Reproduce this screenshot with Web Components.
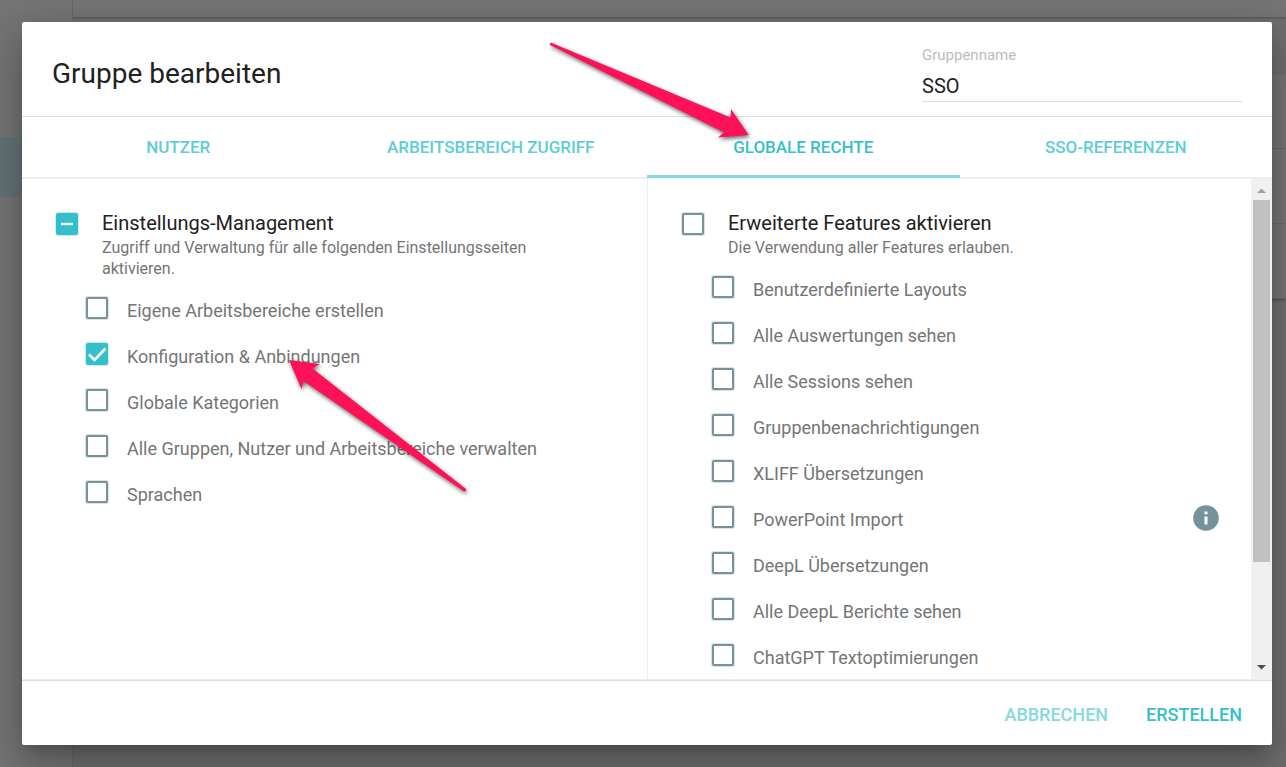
<!DOCTYPE html>
<html lang="de">
<head>
<meta charset="utf-8">
<meta name="viewport" content="width=device-width, initial-scale=1">
<title>Gruppe bearbeiten</title>
<style>
  html, body { height: 100%; }
  body { margin: 0; overflow: hidden; font-family: Roboto, sans-serif; color: #212121; background: #757575; }
</style>
</head>
<body>
<group-page></group-page>

<script>
const define = (name, html, setup) => {
  const tpl = document.createElement('template');
  tpl.innerHTML = html;
  customElements.define(name, class extends HTMLElement {
    constructor() {
      super();
      this.attachShadow({ mode: 'open' }).append(tpl.content.cloneNode(true));
    }
    connectedCallback() { if (setup) setup(this, this.shadowRoot); }
  });
};

/* Dimmed application behind the dialog */
define('app-backdrop', `
  <style>
    :host { display: grid; grid-template-columns: 73px 1fr; height: 100%; background: #757575; }
    aside { border-right: 1px solid #686868; padding-top: 137px; }
    .active { height: 60px; background: #657375; }
    main { display: flex; flex-direction: column; background: #6f6f6f; }
    .bar { height: 17px; background: #757575; box-shadow: 0 1px 2px #0004; clip-path: inset(0 0 -4px 0); }
    .card { margin-top: 57px; background: #757575; box-shadow: 0 1px 3px #0005; }
    .row { height: 74px; border-bottom: 1px solid #696969; }
  </style>
  <aside><div class="active"></div></aside>
  <main>
    <div class="bar"></div>
    <div class="card"><div class="row"></div><div class="row"></div><div class="row"></div></div>
  </main>
`);

/* Checkbox with a slotted label; kind="main" gives the section heading style */
define('check-item', `
  <style>
    :host { display: flex; height: 46px; align-items: flex-start; font-size: 18px; line-height: 24px; color: #757575; }
    label { display: flex; flex: 1; gap: 18px; }
    .box { display: grid; flex: none; width: 24px; height: 24px; place-items: center; }
    .box > * { grid-area: 1 / 1; }
    input { appearance: none; box-sizing: border-box; margin: 0; width: 22px; height: 22px;
            border: 2px solid #76929a; border-radius: 2px; background: #fff; box-shadow: 0 0 0 1px #76929a44; }
    input:checked, input:indeterminate { border-color: #35bfcb; background: #35bfcb; box-shadow: 0 0 0 1px #35bfcb44; }
    svg { width: 24px; height: 24px; fill: none; stroke: #fff; pointer-events: none; display: none; }
    input:checked ~ .tick, input:indeterminate ~ .dash { display: block; }
    .text { padding-top: 3px; }
    .note { display: none; }
    :host([kind="main"]) { height: auto; font-size: 20px; line-height: 22px; color: #212121; }
    :host([kind="main"]) label { gap: 23px; }
    :host([kind="main"]) .text { padding: 0; max-width: 480px; }
    :host([kind="main"]) .note { display: block; padding-top: 3px; font-size: 16px; line-height: 21px; color: #757575; }
  </style>
  <label>
    <span class="box">
      <input type="checkbox">
      <svg class="tick" viewBox="0 0 24 24"><path d="M4 12.5 9.5 18 20.5 6.500" stroke-width="2.6"/></svg>
      <svg class="dash" viewBox="0 0 24 24"><path d="M6 12H18" stroke-width="2.4"/></svg>
    </span>
    <span class="text"><slot></slot><span class="note"><slot name="note"></slot></span></span>
  </label>
  <slot name="action"></slot>
`, (el, root) => {
  const box = root.querySelector('input');
  box.checked = el.getAttribute('state') === 'checked';
  box.indeterminate = el.getAttribute('state') === 'mixed';
});

define('info-button', `
  <style>
    :host { display: block; flex: none; margin-right: 2px; }
    button { display: block; margin: 0; padding: 0; border: 0; background: none; }
    svg { display: block; width: 26px; height: 26px; }
  </style>
  <button type="button" aria-label="Info">
    <svg viewBox="0 0 26 26"><circle cx="13" cy="13" r="12.8" fill="#76929a"/><path d="M11.5 6.5h3v2.7h-3zM11.5 11.5h3v8h-3z" fill="#fff"/></svg>
  </button>
`);

/* Section: heading item and the indented list below it */
define('rights-column', `
  <style>
    :host { display: block; box-sizing: border-box; padding: 33px 30px 0 33px; min-width: 0; }
    .list { padding: 17px 0 0 30px; }
  </style>
  <slot name="head"></slot>
  <div class="list"><slot></slot></div>
`);

define('scroll-bar', `
  <style>
    :host { display: flex; flex-direction: column; align-items: center; width: 21px; background: #f0f0f0; }
    svg { display: block; flex: none; width: 21px; height: 21px; }
    .track { flex: 1; align-self: stretch; padding: 0 2px; }
    .thumb { height: 79%; background: #c1c1c1; }
  </style>
  <svg viewBox="0 0 21 21"><path d="M6 14 10.500 9.500 15 14z" fill="#a0a0a0"/></svg>
  <div class="track"><div class="thumb"></div></div>
  <svg viewBox="0 0 21 21"><path d="M6 7 10.500 11.500 15 7z" fill="#4c4c4c"/></svg>
`);

define('tab-bar', `
  <style>
    :host { display: flex; border-bottom: 2px solid #eee; height: 60px; }
  </style>
  <slot></slot>
`);

define('tab-item', `
  <style>
    :host { display: flex; flex: 1 1 0; }
    button { flex: 1; margin: 0 0 -1px; padding: 2px 0 0; border: 0; border-bottom: 3px solid transparent; background: none;
             font: 500 17px/24px Roboto, sans-serif; color: #5ecdd6; }
    :host([selected]) button { color: #35bfcb; border-color: #86d9df; }
  </style>
  <button type="button" role="tab"><slot></slot></button>
`);

define('text-field', `
  <style>
    :host { display: flex; flex-direction: column; width: 320px; }
    label { font-size: 15px; line-height: 20px; color: #bcbcbc; }
    input { margin: 0; padding: 9px 0 3px; border: 0; border-bottom: 1px solid #e0e0e0; outline: 0; background: none;
            font: 20px/24px Roboto, sans-serif; height: 24px; color: #212121; }
  </style>
  <label for="name"><slot></slot></label>
  <input id="name" type="text" value="SSO">
`);

define('action-button', `
  <style>
    :host { display: block; }
    button { display: block; margin: 0; padding: 0; border: 0; background: none; font: 500 18px/24px Roboto, sans-serif; color: #35bfcb; }
    :host([quiet]) button { color: #86d9df; }
  </style>
  <button type="button"><slot></slot></button>
`);

/* Pink pointer laid over the dialog */
define('pointer-arrow', `
  <style>
    :host { position: absolute; pointer-events: none; }
    svg { display: block; overflow: visible; fill: #ff1158; filter: drop-shadow(1px 2px 2px #0009); }
  </style>
  <svg width="1" height="1"><path/></svg>
`, (el, root) => root.querySelector('path').setAttribute('d', el.getAttribute('shape')));

define('group-dialog', `
  <style>
    :host { display: flex; flex-direction: column; position: relative; box-sizing: border-box; background: #fff; border-radius: 2px;
            box-shadow: 0 11px 15px -7px #0003, 0 24px 38px 3px #00000024, 0 9px 46px 8px #0000001f; }
    header { display: flex; justify-content: space-between; align-items: flex-start; padding: 23px 30px 14px; border-bottom: 1px solid #e0e0e0; }
    h1 { margin: 11px 0 0; font-size: 28px; line-height: 36px; font-weight: 400; }
    .body { flex: 1; min-height: 0; display: grid; grid-template-columns: 1fr 1fr; border-bottom: 1px solid #eee; }
    .pane { display: flex; min-width: 0; min-height: 0; overflow: hidden; }
    .pane + .pane { border-left: 1px solid #eee; }
    rights-column { flex: 1; }
    footer { display: flex; justify-content: flex-end; gap: 38px; padding: 22px 30px 18px; border-top: 1px solid #ddd; }
    .first { left: 527px; top: 19px; }
    .second { left: 267px; top: 337px; }
  </style>
  <header>
    <h1>Gruppe bearbeiten</h1>
    <text-field>Gruppenname</text-field>
  </header>
  <tab-bar role="tablist">
    <tab-item>NUTZER</tab-item>
    <tab-item>ARBEITSBEREICH ZUGRIFF</tab-item>
    <tab-item selected>GLOBALE RECHTE</tab-item>
    <tab-item>SSO-REFERENZEN</tab-item>
  </tab-bar>
  <div class="body">
    <div class="pane">
      <rights-column>
        <check-item slot="head" kind="main" state="mixed">Einstellungs-Management<span slot="note">Zugriff und Verwaltung für alle folgenden Einstellungsseiten aktivieren.</span></check-item>
        <check-item>Eigene Arbeitsbereiche erstellen</check-item>
        <check-item state="checked">Konfiguration &amp; Anbindungen</check-item>
        <check-item>Globale Kategorien</check-item>
        <check-item>Alle Gruppen, Nutzer und Arbeitsbereiche verwalten</check-item>
        <check-item>Sprachen</check-item>
      </rights-column>
    </div>
    <div class="pane">
      <rights-column>
        <check-item slot="head" kind="main">Erweiterte Features aktivieren<span slot="note">Die Verwendung aller Features erlauben.</span></check-item>
        <check-item>Benutzerdefinierte Layouts</check-item>
        <check-item>Alle Auswertungen sehen</check-item>
        <check-item>Alle Sessions sehen</check-item>
        <check-item>Gruppenbenachrichtigungen</check-item>
        <check-item>XLIFF Übersetzungen</check-item>
        <check-item>PowerPoint Import<info-button slot="action"></info-button></check-item>
        <check-item>DeepL Übersetzungen</check-item>
        <check-item>Alle DeepL Berichte sehen</check-item>
        <check-item>ChatGPT Textoptimierungen</check-item>
      </rights-column>
      <scroll-bar></scroll-bar>
    </div>
  </div>
  <footer>
    <action-button quiet>ABBRECHEN</action-button>
    <action-button>ERSTELLEN</action-button>
  </footer>
  <pointer-arrow class="first" shape="M1 2.500Q2 1 4 2.500L181.500 76.500 182 68 199.700 94 169 96.500 175 91.500 2 4.500Q0 3.500 1 2.500Z"></pointer-arrow>
  <pointer-arrow class="second" shape="M0 1 31 5 23.500 9.500 177 130Q177.500 132.500 175 132.500L14.500 22 12.500 30Z"></pointer-arrow>
`);

define('group-page', `
  <style>
    :host { display: grid; height: 100vh; }
    app-backdrop, group-dialog { grid-area: 1 / 1; min-height: 0; }
    group-dialog { margin: 22px 14px 22px 22px; }
  </style>
  <app-backdrop></app-backdrop>
  <group-dialog role="dialog" aria-label="Gruppe bearbeiten"></group-dialog>
`);
</script>
</body>
</html>
